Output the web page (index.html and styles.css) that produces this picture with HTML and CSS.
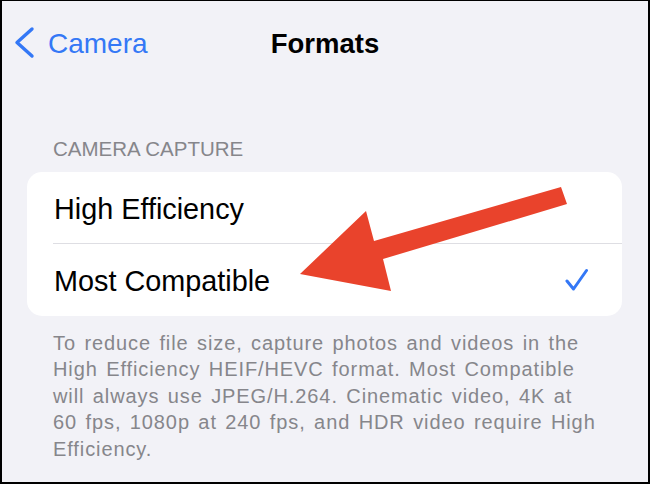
FILE: index.html
```html
<!DOCTYPE html>
<html>
<head>
<meta charset="utf-8">
<link rel="stylesheet" href="styles.css">
</head>
<body>
<div class="frame">
  <div class="nav">
    <div class="back">
      <svg class="chev" width="22" height="36" viewBox="0 0 22 36"><polyline points="19,3 4,16.5 19,30" fill="none" stroke="#3478f6" stroke-width="3.4" stroke-linecap="round" stroke-linejoin="round"/></svg>
      <span class="back-label">Camera</span>
    </div>
    <div class="title">Formats</div>
    <div></div>
  </div>
  <div class="section-header">CAMERA CAPTURE</div>
  <div class="card">
    <div class="row sep"><span>High Efficiency</span></div>
    <div class="row"><span>Most Compatible</span>
      <svg class="check" width="24" height="24" viewBox="0 0 24 24"><polyline points="2,13 8.5,21 21.5,2.5" fill="none" stroke="#3478f6" stroke-width="3" stroke-linecap="round" stroke-linejoin="round"/></svg>
    </div>
  </div>
  <p class="footer">To reduce file size, capture photos and videos in the High Efficiency HEIF/HEVC format. Most Compatible will always use JPEG/H.264. Cinematic video, 4K at 60 fps, 1080p at 240 fps, and HDR video require High Efficiency.</p>
  <svg class="arrow" width="650" height="484" viewBox="0 0 650 484"><polygon points="300,274 366,211 374,241 561,187 567,204 383,259 391,291" fill="#e9432c"/></svg>
</div>
</body>
</html>
```
FILE: styles.css
```css
html, body {
  margin: 0;
  padding: 0;
}
body {
  font-family: "Liberation Sans", Arial, sans-serif;
}
.frame {
  position: relative;
  width: 650px;
  height: 484px;
  box-sizing: border-box;
  border: 2px solid #000;
  border-top-width: 1px;
  background: #f2f2f7;
  overflow: hidden;
}
.nav {
  display: grid;
  grid-template-columns: 1fr auto 1fr;
  padding-top: 25px;
  height: 36px;
  line-height: 36px;
  font-size: 27px;
}
.back {
  display: flex;
  align-items: flex-start;
  padding-left: 11px;
  color: #3478f6;
}
.chev {
  display: block;
}
.back-label {
  margin-left: 13px;
  font-size: 28px;
}
.title {
  font-weight: bold;
  color: #000;
  font-size: 27.5px;
}
.section-header {
  margin: 75px 0 0 51px;
  font-size: 20.5px;
  line-height: 24px;
  color: #86868b;
}
.card {
  margin: 11px 26px 0 25px;
  background: #fff;
  border-radius: 15px;
  overflow: hidden;
}
.row {
  display: flex;
  align-items: center;
  justify-content: space-between;
  height: 69px;
  padding: 3px 33px 0 1px;
  margin-left: 26px;
  font-size: 28.8px;
  color: #000;
}
.row.sep {
  height: 68px;
  border-bottom: 1px solid #dedee3;
}
.check {
  display: block;
  margin-top: -3px;
}
.footer {
  margin: 14px 48px 0 51px;
  font-size: 20px;
  line-height: 26.4px;
  letter-spacing: 0.9px;
  word-spacing: 2px;
  color: #86868b;
}
.arrow {
  position: absolute;
  left: -2px;
  top: -1px;
}
```
